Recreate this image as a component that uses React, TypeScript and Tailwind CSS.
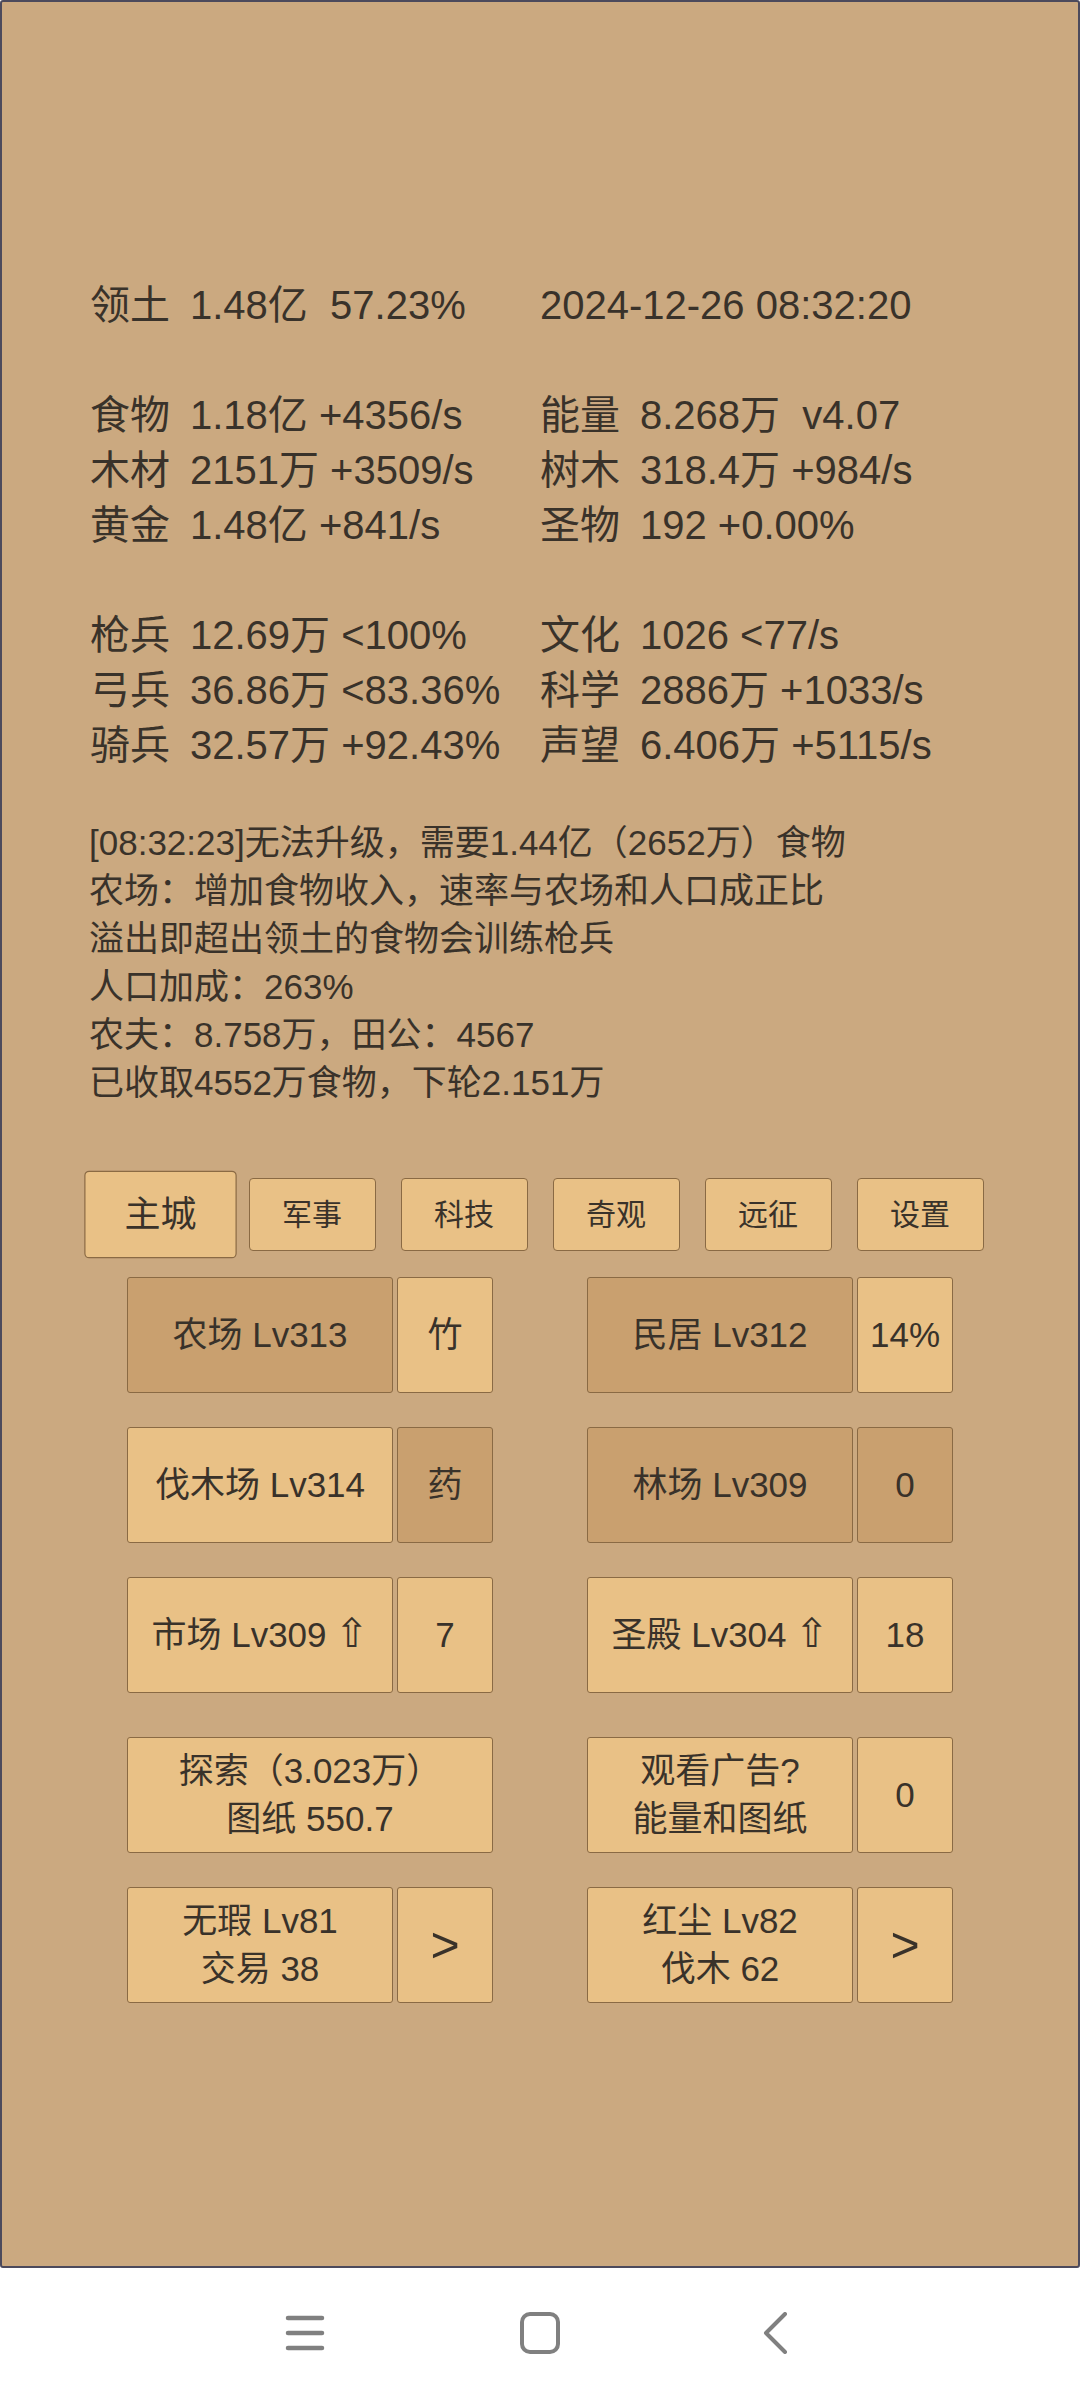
const stats: [string, string, string, string][] = [
  ['领土', '1.48亿  57.23%', '', '2024-12-26 08:32:20'],
  ['', '', '', ''],
  ['食物', '1.18亿 +4356/s', '能量', '8.268万  v4.07'],
  ['木材', '2151万 +3509/s', '树木', '318.4万 +984/s'],
  ['黄金', '1.48亿 +841/s', '圣物', '192 +0.00%'],
  ['', '', '', ''],
  ['枪兵', '12.69万 <100%', '文化', '1026 <77/s'],
  ['弓兵', '36.86万 <83.36%', '科学', '2886万 +1033/s'],
  ['骑兵', '32.57万 +92.43%', '声望', '6.406万 +5115/s'],
];

const messages = [
  '[08:32:23]无法升级，需要1.44亿（2652万）食物',
  '农场：增加食物收入，速率与农场和人口成正比',
  '溢出即超出领土的食物会训练枪兵',
  '人口加成：263%',
  '农夫：8.758万，田公：4567',
  '已收取4552万食物，下轮2.151万',
];

const tabs = ['主城', '军事', '科技', '奇观', '远征', '设置'];

const light = 'bg-[#e9c186]';
const dark = 'bg-[#c9a06f]';

function StatCell({ label, value }: { label: string; value: string }) {
  return (
    <div className="flex h-[55px] items-center">
      {label && <span className="w-[100px] shrink-0">{label}</span>}
      <span className="whitespace-pre">{value}</span>
    </div>
  );
}

function Btn({
  children,
  w,
  tone,
}: {
  children: React.ReactNode;
  w: string;
  tone: string;
}) {
  return (
    <div
      className={`${w} ${tone} h-[116px] shrink-0 flex flex-col items-center justify-center text-center rounded-[3px] border border-[#8a6a44] text-[35px] leading-[48px]`}
    >
      {children}
    </div>
  );
}

function Arrow() {
  return (
    <span className="font-[family-name:DejaVu_Sans,sans-serif] text-[40px] leading-none font-light ml-[8px]">⇧</span>
  );
}

export default function App() {
  return (
    <div className="w-[1080px] h-[2400px] bg-white flex flex-col font-[family-name:Liberation_Sans,Noto_Sans_CJK_SC,sans-serif] text-[#39322a]">
      <div className="h-[2268px] shrink-0 bg-[#cba980] border-2 border-[#4c4a5c] rounded-[3px] flex flex-col pt-[276px]">
        {/* stats */}
        <div className="grid grid-cols-[450px_1fr] pl-[88px] text-[40px] leading-[55px]">
          {stats.map((r, i) => (
            <div key={i} className="contents">
              <StatCell label={r[0]} value={r[1]} />
              <StatCell label={r[2]} value={r[3]} />
            </div>
          ))}
        </div>

        {/* log */}
        <div className="mt-[46px] pl-[87px] text-[35px] leading-[48px]">
          {messages.map((m) => (
            <div key={m}>{m}</div>
          ))}
        </div>

        {/* tabs */}
        <div className="mt-[71px] flex justify-center gap-[25px]">
          {tabs.map((t, i) => (
            <div
              key={t}
              className={`w-[127px] h-[73px] flex items-center justify-center rounded-[4px] border border-[#8a6a44] ${light} text-[30px] ${
                i === 0 ? 'scale-[1.2]' : ''
              }`}
            >
              {t}
            </div>
          ))}
        </div>

        {/* buildings */}
        <div className="mt-[26px] flex flex-col gap-[34px]">
          <div className="flex justify-center gap-[94px]">
            <div className="flex gap-[4px]">
              <Btn w="w-[266px]" tone={dark}>农场 Lv313</Btn>
              <Btn w="w-[96px]" tone={light}>竹</Btn>
            </div>
            <div className="flex gap-[4px]">
              <Btn w="w-[266px]" tone={dark}>民居 Lv312</Btn>
              <Btn w="w-[96px]" tone={light}>14%</Btn>
            </div>
          </div>
          <div className="flex justify-center gap-[94px]">
            <div className="flex gap-[4px]">
              <Btn w="w-[266px]" tone={light}>伐木场 Lv314</Btn>
              <Btn w="w-[96px]" tone={dark}>药</Btn>
            </div>
            <div className="flex gap-[4px]">
              <Btn w="w-[266px]" tone={dark}>林场 Lv309</Btn>
              <Btn w="w-[96px]" tone={dark}>0</Btn>
            </div>
          </div>
          <div className="flex justify-center gap-[94px]">
            <div className="flex gap-[4px]">
              <Btn w="w-[266px]" tone={light}>
                <span>
                  市场 Lv309
                  <Arrow />
                </span>
              </Btn>
              <Btn w="w-[96px]" tone={light}>7</Btn>
            </div>
            <div className="flex gap-[4px]">
              <Btn w="w-[266px]" tone={light}>
                <span>
                  圣殿 Lv304
                  <Arrow />
                </span>
              </Btn>
              <Btn w="w-[96px]" tone={light}>18</Btn>
            </div>
          </div>
        </div>

        <div className="mt-[44px] flex flex-col gap-[34px]">
          <div className="flex justify-center gap-[94px]">
            <Btn w="w-[366px]" tone={light}>
              <div>探索（3.023万）</div>
              <div>图纸 550.7</div>
            </Btn>
            <div className="flex gap-[4px]">
              <Btn w="w-[266px]" tone={light}>
                <div>观看广告?</div>
                <div>能量和图纸</div>
              </Btn>
              <Btn w="w-[96px]" tone={light}>0</Btn>
            </div>
          </div>
          <div className="flex justify-center gap-[94px]">
            <div className="flex gap-[4px]">
              <Btn w="w-[266px]" tone={light}>
                <div>无瑕 Lv81</div>
                <div>交易 38</div>
              </Btn>
              <Btn w="w-[96px]" tone={light}>
                <span className="text-[50px]">&gt;</span>
              </Btn>
            </div>
            <div className="flex gap-[4px]">
              <Btn w="w-[266px]" tone={light}>
                <div>红尘 Lv82</div>
                <div>伐木 62</div>
              </Btn>
              <Btn w="w-[96px]" tone={light}>
                <span className="text-[50px]">&gt;</span>
              </Btn>
            </div>
          </div>
        </div>
      </div>

      {/* system nav bar */}
      <div className="flex-1 flex items-center justify-center gap-[155px] pb-[2px]">
        <div className="w-[80px] flex justify-center">
          <svg width="40" height="38" viewBox="0 0 40 38">
            <g stroke="#808080" strokeWidth="4.5" strokeLinecap="round">
              <line x1="3" y1="4" x2="37" y2="4" />
              <line x1="3" y1="19" x2="37" y2="19" />
              <line x1="3" y1="34" x2="37" y2="34" />
            </g>
          </svg>
        </div>
        <div className="w-[80px] flex justify-center">
          <svg width="40" height="42" viewBox="0 0 40 42">
            <rect x="2" y="2" width="36" height="38" rx="8" fill="none" stroke="#808080" strokeWidth="4" />
          </svg>
        </div>
        <div className="w-[80px] flex justify-center">
          <svg width="26" height="42" viewBox="0 0 26 42">
            <polyline points="23,2 4,21 23,40" fill="none" stroke="#808080" strokeWidth="4" strokeLinecap="round" strokeLinejoin="round" />
          </svg>
        </div>
      </div>
    </div>
  );
}
